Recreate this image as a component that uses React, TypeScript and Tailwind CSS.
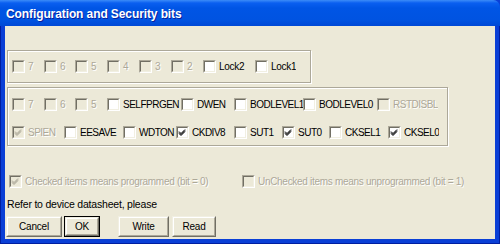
import React from "react";

const FONT = "font-['Liberation_Sans',sans-serif] text-[10px]";

function Box({ checked, disabled }: { checked?: boolean; disabled?: boolean }) {
  return (
    <div className="relative w-[13px] h-[13px] shrink-0 border-t border-l border-t-[#aca899] border-l-[#aca899] border-r border-b border-r-white border-b-white">
      <div
        className={
          "w-[11px] h-[11px] border-t border-l border-t-[#716f64] border-l-[#716f64] border-r border-b border-r-[#f1efe2] border-b-[#f1efe2] " +
          (disabled ? "bg-[#ece9d8]" : "bg-white")
        }
      >
        {checked && (
          <svg width="9" height="9" viewBox="0 0 9 9" className="block">
            <path
              d="M1 3.5 L3 5.5 L7 1.5 M1 4.5 L3 6.5 L7 2.5 M1 5.5 L3 7.5 L7 3.5"
              stroke={disabled ? "#aca899" : "#000"}
              strokeWidth="1"
              fill="none"
            />
          </svg>
        )}
      </div>
    </div>
  );
}

function Cb({
  w,
  label,
  checked,
  disabled,
  caps,
}: {
  w?: number;
  label: string;
  checked?: boolean;
  disabled?: boolean;
  caps?: boolean;
}) {
  return (
    <div
      className="flex items-center overflow-hidden shrink-0 h-[16px]"
      style={w ? { width: w } : undefined}
    >
      <Box checked={checked} disabled={disabled} />
      <span
        className={
          "ml-[3px] whitespace-nowrap leading-[13px] " +
          (caps ? "tracking-[-0.5px] " : "tracking-[-0.3px] ") +
          (disabled ? "text-[#aca899] [text-shadow:1px_1px_0_#ffffff]" : "text-black")
        }
      >
        {label}
      </span>
    </div>
  );
}

function Btn({ label, w, def }: { label: string; w: number; def?: boolean }) {
  const inner = (
    <div className="h-full w-full border-t border-l border-t-[#f1efe2] border-l-[#f1efe2] border-r border-b border-r-[#716f64] border-b-[#716f64]">
      <div className="h-full w-full border-t border-l border-t-white border-l-white border-r border-b border-r-[#aca899] border-b-[#aca899] flex items-center justify-center bg-[#ece9d8] text-black tracking-[-0.2px]">
        {label}
      </div>
    </div>
  );
  return (
    <div className="h-[21px] shrink-0" style={{ width: w }}>
      {def ? <div className="h-full w-full border border-black">{inner}</div> : inner}
    </div>
  );
}

export default function App() {
  return (
    <div className="w-[500px] h-[244px] flex flex-col bg-[#0a3fd6] overflow-hidden">
      {/* Title bar */}
      <div className="h-[26px] shrink-0 bg-[linear-gradient(to_bottom,#3c8cf8_0px,#0a5ff0_3px,#0055e5_8px,#0053e1_20px,#0049d6_26px)] rounded-tr-[7px] flex items-center pl-[6px]">
        <span className="font-['Liberation_Sans',sans-serif] font-bold text-[12px] tracking-[-0.1px] text-white [text-shadow:1px_1px_0_#0a1f9c] mt-[1px]">
          Configuration and Security bits
        </span>
      </div>
      {/* Frame */}
      <div className="flex-1 flex px-[4px] pb-[4px] border-l border-r border-b border-l-[#001ea0] border-r-[#001ea0] border-b-[#001ea0]">
        <div className={"flex-1 bg-[#ece9d8] flex flex-col " + FONT}>
          {/* Group 1 */}
          <div className="ml-[2px] mt-[24px] w-[304px] h-[33px] border border-[#aca899] shadow-[inset_1px_1px_0_#fff,1px_1px_0_#fff] flex items-center pl-[4px]">
            <Cb w={32} label="7" disabled />
            <Cb w={31} label="6" disabled />
            <Cb w={32} label="5" disabled />
            <Cb w={32} label="4" disabled />
            <Cb w={32} label="3" disabled />
            <Cb w={32} label="2" disabled />
            <Cb w={52} label="Lock2" />
            <Cb label="Lock1" />
          </div>
          {/* Group 2 */}
          <div className="ml-[2px] mt-[4px] w-[441px] h-[59px] border border-[#aca899] shadow-[inset_1px_1px_0_#fff,1px_1px_0_#fff] flex flex-col pl-[4px] pt-[8px] gap-[12px]">
            <div className="flex items-center">
              <Cb w={32} label="7" disabled />
              <Cb w={31} label="6" disabled />
              <Cb w={32} label="5" disabled />
              <Cb w={74} label="SELFPRGEN" caps />
              <Cb w={53} label="DWEN" caps />
              <Cb w={69} label="BODLEVEL1" caps />
              <Cb w={74} label="BODLEVEL0" caps />
              <Cb label="RSTDISBL" caps disabled />
            </div>
            <div className="flex items-center">
              <Cb w={52} label="SPIEN" caps checked disabled />
              <Cb w={59} label="EESAVE" caps />
              <Cb w={53} label="WDTON" caps />
              <Cb w={58} label="CKDIV8" caps checked />
              <Cb w={48} label="SUT1" caps />
              <Cb w={47} label="SUT0" caps checked />
              <Cb w={59} label="CKSEL1" caps />
              <Cb label="CKSEL0" caps checked />
            </div>
          </div>
          {/* Legend */}
          <div className="mt-[27px] flex items-center pl-[4px]">
            <Cb w={233} label="Checked items means programmed (bit = 0)" checked disabled />
            <Cb label="UnChecked items means unprogrammed (bit = 1)" disabled />
          </div>
          <div className="mt-[9px] pl-[2px] leading-[13px] text-black tracking-[-0.2px] text-[10.5px]">
            Refer to device datasheet, please
          </div>
          <div className="mt-[5px] flex pl-[1px]">
            <Btn label="Cancel" w={56} />
            <div className="w-[2px]" />
            <Btn label="OK" w={36} def />
            <div className="w-[18px]" />
            <Btn label="Write" w={51} />
            <div className="w-[3px]" />
            <Btn label="Read" w={44} />
          </div>
        </div>
      </div>
    </div>
  );
}
